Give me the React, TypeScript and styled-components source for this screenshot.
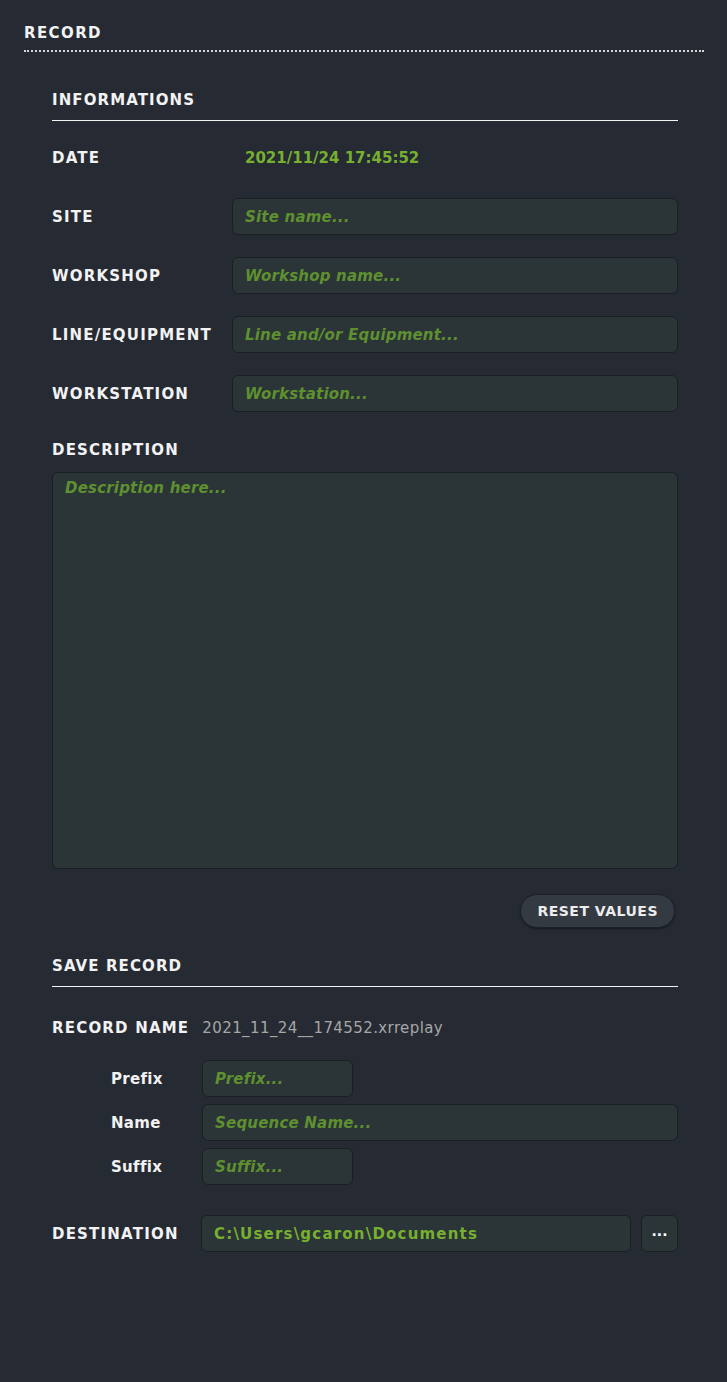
import styled, { createGlobalStyle } from "styled-components";

const GlobalStyle = createGlobalStyle`
  html, body {
    margin: 0;
    padding: 0;
    background: #262a33;
  }
  * { box-sizing: border-box; }
`;

const FONT = `"DejaVu Sans", "Liberation Sans", sans-serif`;

const Page = styled.div`
  min-height: 1382px;
  background: #262a33;
  padding: 23px 23px 0 24px;
  font-family: ${FONT};
  color: #f2f2f2;
`;

const MainTitle = styled.div`
  font-size: 15px;
  font-weight: bold;
  letter-spacing: 1.4px;
  line-height: 20px;
  padding-bottom: 7px;
  border-bottom: 2px dotted #d6d6d6;
`;

const Body = styled.div`
  padding: 0 26px 0 28px;
`;

const SectionTitle = styled.div<{ $top: number }>`
  margin-top: ${(p) => p.$top}px;
  font-size: 15px;
  font-weight: bold;
  letter-spacing: 1.1px;
  line-height: 20px;
  padding-bottom: 10px;
  border-bottom: 1px solid #f2f2f2;
`;

const Rows = styled.div<{ $top: number; $gap: number }>`
  margin-top: ${(p) => p.$top}px;
  display: flex;
  flex-direction: column;
  gap: ${(p) => p.$gap}px;
`;

const Row = styled.div<{ $label: number; $indent?: number }>`
  display: grid;
  grid-template-columns: ${(p) => p.$label}px 1fr;
  align-items: center;
  min-height: 37px;
  padding-left: ${(p) => p.$indent || 0}px;
`;

const Label = styled.div<{ $plain?: boolean }>`
  font-size: 15px;
  font-weight: bold;
  letter-spacing: ${(p) => (p.$plain ? 0.3 : 1.2)}px;
  color: #f2f2f2;
  white-space: nowrap;
`;

const DateValue = styled.div`
  padding-left: 13px;
  font-size: 15px;
  font-weight: bold;
  letter-spacing: 0;
  color: #77b02f;
`;

const Field = styled.input<{ $width?: number }>`
  width: ${(p) => (p.$width ? `${p.$width}px` : "100%")};
  height: 37px;
  background: #2b3437;
  border: 1px solid #1b1f24;
  border-radius: 6px;
  padding: 0 12px;
  font-family: ${FONT};
  font-size: 15px;
  letter-spacing: 0.6px;
  color: #77b02f;
  outline: none;
  &::placeholder {
    color: #5e9030;
    font-style: italic;
    font-weight: bold;
    font-size: 15px;
    letter-spacing: 0.2px;
  }
`;

const PathField = styled(Field)`
  font-weight: bold;
  letter-spacing: 1.2px;
  flex: 1;
`;

const DescLabel = styled(Label)`
  margin-top: 27px;
  line-height: 22px;
`;

const Area = styled.textarea`
  display: block;
  width: 100%;
  height: 397px;
  margin-top: 11px;
  resize: none;
  background: #2b3437;
  border: 1px solid #1b1f24;
  border-radius: 6px;
  padding: 6px 12px;
  font-family: ${FONT};
  font-size: 15px;
  letter-spacing: 0.6px;
  color: #77b02f;
  outline: none;
  &::placeholder {
    color: #5e9030;
    font-style: italic;
    font-weight: bold;
    font-size: 15px;
    letter-spacing: 0.2px;
  }
`;

const Actions = styled.div`
  display: flex;
  justify-content: flex-end;
  margin-top: 25px;
  padding-right: 3px;
`;

const PillButton = styled.button`
  height: 34px;
  padding: 0 16px;
  border-radius: 17px;
  background: #343a42;
  border: 1px solid #1d2127;
  box-shadow: 0 1px 2px rgba(0, 0, 0, 0.4);
  color: #ececec;
  font-family: ${FONT};
  font-size: 14px;
  font-weight: bold;
  letter-spacing: 0.5px;
`;

const RecordName = styled.div`
  display: flex;
  align-items: center;
  gap: 13px;
  margin-top: 32px;
`;

const FileName = styled.span`
  font-size: 15px;
  color: #a6a6a6;
  letter-spacing: 0.4px;
`;

const DestRow = styled.div`
  display: flex;
  gap: 10px;
`;

const DotsButton = styled.button`
  width: 37px;
  height: 37px;
  background: #2b3437;
  border: 1px solid #1b1f24;
  border-radius: 6px;
  color: #fff;
  font-family: ${FONT};
  font-size: 14px;
  font-weight: bold;
  padding: 0 0 6px;
`;

export default function App() {
  return (
    <>
      <GlobalStyle />
      <Page>
        <MainTitle>RECORD</MainTitle>
        <Body>
          <SectionTitle $top={38}>INFORMATIONS</SectionTitle>
          <Rows $top={18} $gap={22}>
            <Row $label={180}>
              <Label>DATE</Label>
              <DateValue>2021/11/24 17:45:52</DateValue>
            </Row>
            <Row $label={180}>
              <Label>SITE</Label>
              <Field placeholder="Site name..." />
            </Row>
            <Row $label={180}>
              <Label>WORKSHOP</Label>
              <Field placeholder="Workshop name..." />
            </Row>
            <Row $label={180}>
              <Label>LINE/EQUIPMENT</Label>
              <Field placeholder="Line and/or Equipment..." />
            </Row>
            <Row $label={180}>
              <Label>WORKSTATION</Label>
              <Field placeholder="Workstation..." />
            </Row>
          </Rows>
          <DescLabel>DESCRIPTION</DescLabel>
          <Area placeholder="Description here..." />
          <Actions>
            <PillButton>RESET VALUES</PillButton>
          </Actions>

          <SectionTitle $top={28}>SAVE RECORD</SectionTitle>
          <RecordName>
            <Label>RECORD NAME</Label>
            <FileName>2021_11_24__174552.xrreplay</FileName>
          </RecordName>
          <Rows $top={23} $gap={7}>
            <Row $label={91} $indent={59}>
              <Label $plain>Prefix</Label>
              <Field $width={151} placeholder="Prefix..." />
            </Row>
            <Row $label={91} $indent={59}>
              <Label $plain>Name</Label>
              <Field placeholder="Sequence Name..." />
            </Row>
            <Row $label={91} $indent={59}>
              <Label $plain>Suffix</Label>
              <Field $width={151} placeholder="Suffix..." />
            </Row>
          </Rows>
          <Rows $top={30} $gap={0}>
            <Row $label={149}>
              <Label>DESTINATION</Label>
              <DestRow>
                <PathField defaultValue="C:\Users\gcaron\Documents" />
                <DotsButton>...</DotsButton>
              </DestRow>
            </Row>
          </Rows>
        </Body>
      </Page>
    </>
  );
}
